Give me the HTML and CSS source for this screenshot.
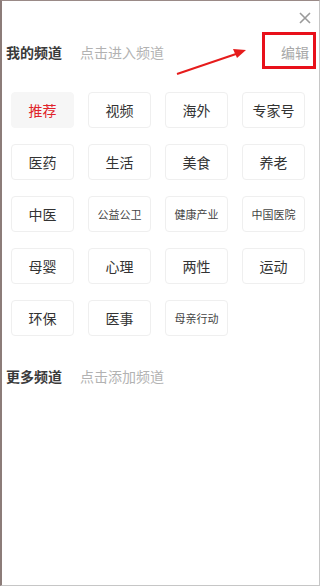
FILE: index.html
```html
<!DOCTYPE html>
<html lang="zh">
<head>
  <meta charset="UTF-8">
  <title>频道管理</title>
  <link rel="stylesheet" href="styles.css">
</head>
<body>
  <div class="panel">
    <div class="close-row">
      <svg class="close" width="12" height="12" viewBox="0 0 12 12">
        <path d="M1 1 L11 11 M11 1 L1 11" stroke="#9a9a9a" stroke-width="1.6" fill="none"/>
      </svg>
    </div>

    <div class="head">
      <span class="title">我的频道</span>
      <span class="hint">点击进入频道</span>
      <span class="edit">编辑</span>
    </div>

    <div class="grid">
      <div class="tile active">推荐</div>
      <div class="tile">视频</div>
      <div class="tile">海外</div>
      <div class="tile">专家号</div>
      <div class="tile">医药</div>
      <div class="tile">生活</div>
      <div class="tile">美食</div>
      <div class="tile">养老</div>
      <div class="tile">中医</div>
      <div class="tile small">公益公卫</div>
      <div class="tile small">健康产业</div>
      <div class="tile small">中国医院</div>
      <div class="tile">母婴</div>
      <div class="tile">心理</div>
      <div class="tile">两性</div>
      <div class="tile">运动</div>
      <div class="tile">环保</div>
      <div class="tile">医事</div>
      <div class="tile small">母亲行动</div>
    </div>

    <div class="head more">
      <span class="title">更多频道</span>
      <span class="hint">点击添加频道</span>
    </div>

    <!-- annotation over the edit button -->
    <div class="mark"></div>
    <svg class="arrow" width="320" height="90" viewBox="0 0 320 90">
      <line x1="177" y1="74" x2="236" y2="54" stroke="#e61c1c" stroke-width="2"/>
      <polygon points="246,50 233,49 237,58" fill="#e61c1c"/>
    </svg>
  </div>
</body>
</html>
```

FILE: styles.css
```css
html, body {
  margin: 0;
  padding: 0;
  background: #fff;
}
body {
  font-family: "Noto Sans CJK SC", "Noto Sans", sans-serif;
}
.panel {
  position: relative;
  width: 320px;
  height: 586px;
  box-sizing: border-box;
  border-left: 2px solid #8c7c79;
  border-top: 1px solid #9a8a87;
  border-right: 1px solid #c6c6c6;
  border-bottom: 1px solid #c6c6c6;
}
.close-row {
  height: 33px;
  display: flex;
  align-items: center;
  justify-content: flex-end;
  padding-right: 8px;
}
.head {
  height: 36px;
  display: flex;
  align-items: center;
  padding: 0 10px 0 4px;
  font-size: 14px;
}
.title {
  color: #3a3a3a;
  font-weight: 600;
}
.hint {
  color: #b2b2b2;
  margin-left: 18px;
}
.edit {
  margin-left: auto;
  color: #a8a8a8;
}
.grid {
  display: grid;
  grid-template-columns: repeat(4, 63px);
  grid-auto-rows: 36px;
  column-gap: 14px;
  row-gap: 16px;
  padding-left: 9px;
  margin-top: 22px;
}
.tile {
  display: flex;
  align-items: center;
  justify-content: center;
  box-sizing: border-box;
  border: 1px solid #efefef;
  border-radius: 4px;
  font-size: 14px;
  color: #333;
}
.tile.small {
  font-size: 11px;
  color: #444;
}
.tile.active {
  background: #f6f6f6;
  border-color: #f6f6f6;
  color: #e0232a;
}
.more {
  margin-top: 22px;
}
.mark {
  position: absolute;
  left: 260px;
  top: 31px;
  width: 54px;
  height: 37px;
  box-sizing: border-box;
  border: 3px solid #e8101a;
}
.arrow {
  position: absolute;
  left: -2px;
  top: -1px;
}
```
